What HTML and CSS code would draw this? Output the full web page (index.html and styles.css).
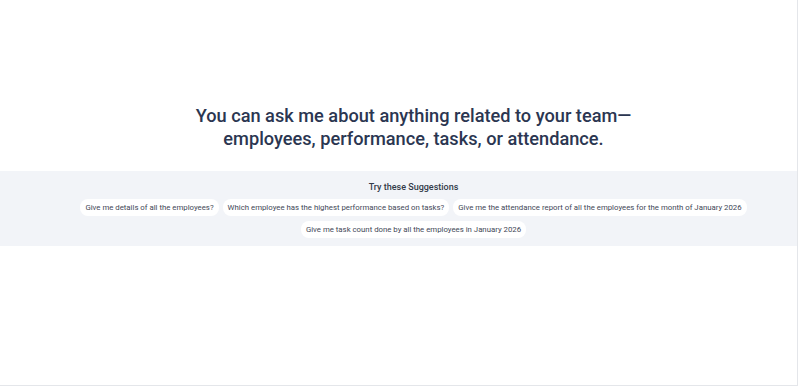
FILE: index.html
```html
<!DOCTYPE html>
<html>
<head>
<meta charset="utf-8">
<link rel="stylesheet" href="styles.css">
</head>
<body>
<div class="page">
  <div class="hero">
    <h1 class="title">You can ask me about anything related to your team—<br>employees, performance, tasks, or attendance.</h1>
  </div>
  <div class="suggest">
    <div class="suggest-title">Try these Suggestions</div>
    <div class="chips">
      <span class="chip">Give me details of all the employees?</span>
      <span class="chip">Which employee has the highest performance based on tasks?</span>
      <span class="chip">Give me the attendance report of all the employees for the month of January 2026</span>
      <span class="chip">Give me task count done by all the employees in January 2026</span>
    </div>
  </div>
  <div class="rest"></div>
</div>
</body>
</html>
```
FILE: styles.css
```css
html, body {
  margin: 0;
  padding: 0;
  background: #ffffff;
  font-family: Roboto, "Liberation Sans", Arial, sans-serif;
}
.page {
  width: 798px;
  height: 386px;
  padding-left: 30px;
  box-sizing: border-box;
  border-right: 1px solid #e4e6ea;
  border-bottom: 1px solid #e4e6ea;
  display: flex;
  flex-direction: column;
}
.hero {
  padding-top: 104px;
  height: 67px;
  box-sizing: content-box;
}
.title {
  margin: 0;
  text-align: center;
  font-size: 18.2px;
  line-height: 23px;
  font-weight: 500;
  color: #2b3651;
}
.suggest {
  background: #f2f4f8;
  height: 75px;
  margin-left: -30px;
  padding-left: 30px;
  box-sizing: border-box;
  padding-top: 10px;
  display: flex;
  flex-direction: column;
  align-items: center;
}
.suggest-title {
  font-size: 9px;
  line-height: 12px;
  font-weight: 500;
  color: #333a48;
  margin-bottom: 6px;
}
.chips {
  display: flex;
  flex-wrap: wrap;
  justify-content: center;
  gap: 5px 4px;
  width: 720px;
}
.chip {
  background: #ffffff;
  border-radius: 8px;
  padding: 0 5px;
  height: 17px;
  line-height: 17px;
  font-size: 7.8px;
  color: #3f4757;
  white-space: nowrap;
}
.rest {
  flex: 1;
}
```
